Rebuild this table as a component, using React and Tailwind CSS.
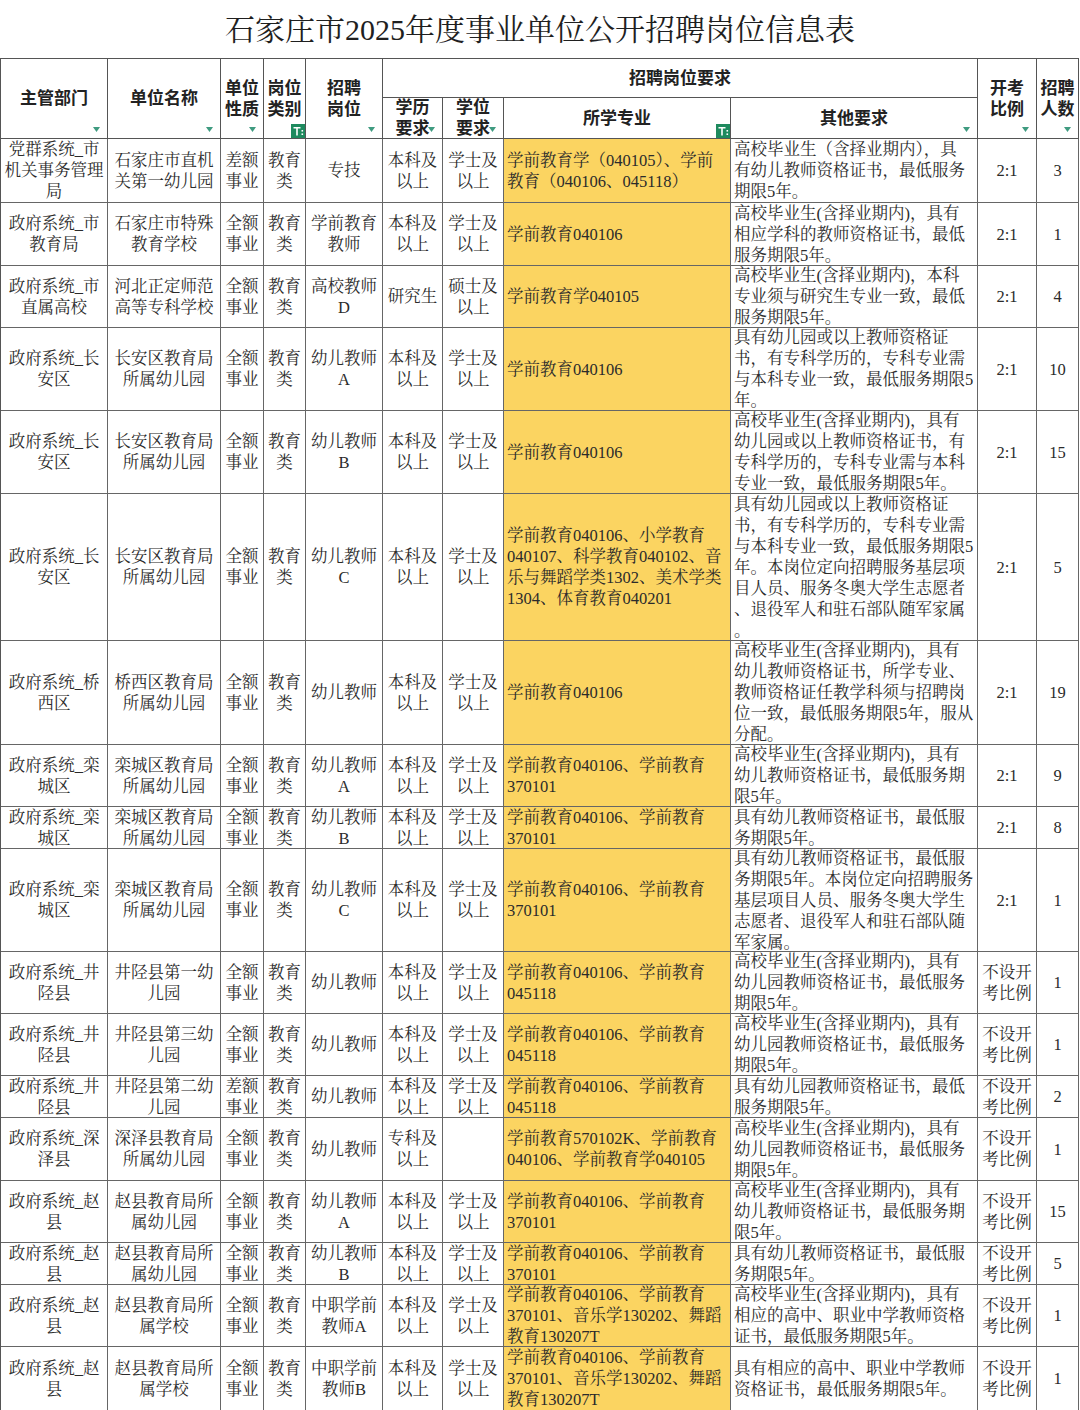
import React from "react";

const COLS =
  "grid grid-cols-[107px_113px_43px_42px_77px_60px_61px_227px_247px_59px_42px]";

const SERIF = {
  fontFamily:
    '"Liberation Serif", "Noto Serif CJK SC", "Noto Sans CJK SC", serif',
};

const rows = [
  { h: "h-[64px]", a: "党群系统_市\n机关事务管理\n局", b: "石家庄市直机\n关第一幼儿园", c: "差额\n事业", d: "教育\n类", e: "专技", f: "本科及\n以上", g: "学士及\n以上", m: "学前教育学（040105）、学前\n教育（040106、045118）", o: "高校毕业生（含择业期内），具\n有幼儿教师资格证书，最低服务\n期限5年。", r: "2:1", n: "3" },
  { h: "h-[63px]", a: "政府系统_市\n教育局", b: "石家庄市特殊\n教育学校", c: "全额\n事业", d: "教育\n类", e: "学前教育\n教师", f: "本科及\n以上", g: "学士及\n以上", m: "学前教育040106", o: "高校毕业生(含择业期内)，具有\n相应学科的教师资格证书，最低\n服务期限5年。", r: "2:1", n: "1" },
  { h: "h-[62px]", a: "政府系统_市\n直属高校", b: "河北正定师范\n高等专科学校", c: "全额\n事业", d: "教育\n类", e: "高校教师\nD", f: "研究生", g: "硕士及\n以上", m: "学前教育学040105", o: "高校毕业生(含择业期内)，本科\n专业须与研究生专业一致，最低\n服务期限5年。", r: "2:1", n: "4" },
  { h: "h-[83px]", a: "政府系统_长\n安区", b: "长安区教育局\n所属幼儿园", c: "全额\n事业", d: "教育\n类", e: "幼儿教师\nA", f: "本科及\n以上", g: "学士及\n以上", m: "学前教育040106", o: "具有幼儿园或以上教师资格证\n书，有专科学历的，专科专业需\n与本科专业一致，最低服务期限5\n年。", r: "2:1", n: "10" },
  { h: "h-[83px]", a: "政府系统_长\n安区", b: "长安区教育局\n所属幼儿园", c: "全额\n事业", d: "教育\n类", e: "幼儿教师\nB", f: "本科及\n以上", g: "学士及\n以上", m: "学前教育040106", o: "高校毕业生(含择业期内)，具有\n幼儿园或以上教师资格证书，有\n专科学历的，专科专业需与本科\n专业一致，最低服务期限5年。", r: "2:1", n: "15" },
  { h: "h-[147px]", a: "政府系统_长\n安区", b: "长安区教育局\n所属幼儿园", c: "全额\n事业", d: "教育\n类", e: "幼儿教师\nC", f: "本科及\n以上", g: "学士及\n以上", m: "学前教育040106、小学教育\n040107、科学教育040102、音\n乐与舞蹈学类1302、美术学类\n1304、体育教育040201", o: "具有幼儿园或以上教师资格证\n书，有专科学历的，专科专业需\n与本科专业一致，最低服务期限5\n年。本岗位定向招聘服务基层项\n目人员、服务冬奥大学生志愿者\n、退役军人和驻石部队随军家属\n。", r: "2:1", n: "5" },
  { h: "h-[104px]", a: "政府系统_桥\n西区", b: "桥西区教育局\n所属幼儿园", c: "全额\n事业", d: "教育\n类", e: "幼儿教师", f: "本科及\n以上", g: "学士及\n以上", m: "学前教育040106", o: "高校毕业生(含择业期内)，具有\n幼儿教师资格证书，所学专业、\n教师资格证任教学科须与招聘岗\n位一致，最低服务期限5年，服从\n分配。", r: "2:1", n: "19" },
  { h: "h-[62px]", a: "政府系统_栾\n城区", b: "栾城区教育局\n所属幼儿园", c: "全额\n事业", d: "教育\n类", e: "幼儿教师\nA", f: "本科及\n以上", g: "学士及\n以上", m: "学前教育040106、学前教育\n370101", o: "高校毕业生(含择业期内)，具有\n幼儿教师资格证书，最低服务期\n限5年。", r: "2:1", n: "9" },
  { h: "h-[42px]", a: "政府系统_栾\n城区", b: "栾城区教育局\n所属幼儿园", c: "全额\n事业", d: "教育\n类", e: "幼儿教师\nB", f: "本科及\n以上", g: "学士及\n以上", m: "学前教育040106、学前教育\n370101", o: "具有幼儿教师资格证书，最低服\n务期限5年。", r: "2:1", n: "8" },
  { h: "h-[103px]", a: "政府系统_栾\n城区", b: "栾城区教育局\n所属幼儿园", c: "全额\n事业", d: "教育\n类", e: "幼儿教师\nC", f: "本科及\n以上", g: "学士及\n以上", m: "学前教育040106、学前教育\n370101", o: "具有幼儿教师资格证书，最低服\n务期限5年。本岗位定向招聘服务\n基层项目人员、服务冬奥大学生\n志愿者、退役军人和驻石部队随\n军家属。", r: "2:1", n: "1" },
  { h: "h-[62px]", a: "政府系统_井\n陉县", b: "井陉县第一幼\n儿园", c: "全额\n事业", d: "教育\n类", e: "幼儿教师", f: "本科及\n以上", g: "学士及\n以上", m: "学前教育040106、学前教育\n045118", o: "高校毕业生(含择业期内)，具有\n幼儿园教师资格证书，最低服务\n期限5年。", r: "不设开\n考比例", n: "1" },
  { h: "h-[62px]", a: "政府系统_井\n陉县", b: "井陉县第三幼\n儿园", c: "全额\n事业", d: "教育\n类", e: "幼儿教师", f: "本科及\n以上", g: "学士及\n以上", m: "学前教育040106、学前教育\n045118", o: "高校毕业生(含择业期内)，具有\n幼儿园教师资格证书，最低服务\n期限5年。", r: "不设开\n考比例", n: "1" },
  { h: "h-[42px]", a: "政府系统_井\n陉县", b: "井陉县第二幼\n儿园", c: "差额\n事业", d: "教育\n类", e: "幼儿教师", f: "本科及\n以上", g: "学士及\n以上", m: "学前教育040106、学前教育\n045118", o: "具有幼儿园教师资格证书，最低\n服务期限5年。", r: "不设开\n考比例", n: "2" },
  { h: "h-[63px]", a: "政府系统_深\n泽县", b: "深泽县教育局\n所属幼儿园", c: "全额\n事业", d: "教育\n类", e: "幼儿教师", f: "专科及\n以上", g: "", m: "学前教育570102K、学前教育\n040106、学前教育学040105", o: "高校毕业生(含择业期内)，具有\n幼儿园教师资格证书，最低服务\n期限5年。", r: "不设开\n考比例", n: "1" },
  { h: "h-[62px]", a: "政府系统_赵\n县", b: "赵县教育局所\n属幼儿园", c: "全额\n事业", d: "教育\n类", e: "幼儿教师\nA", f: "本科及\n以上", g: "学士及\n以上", m: "学前教育040106、学前教育\n370101", o: "高校毕业生(含择业期内)，具有\n幼儿教师资格证书，最低服务期\n限5年。", r: "不设开\n考比例", n: "15" },
  { h: "h-[42px]", a: "政府系统_赵\n县", b: "赵县教育局所\n属幼儿园", c: "全额\n事业", d: "教育\n类", e: "幼儿教师\nB", f: "本科及\n以上", g: "学士及\n以上", m: "学前教育040106、学前教育\n370101", o: "具有幼儿教师资格证书，最低服\n务期限5年。", r: "不设开\n考比例", n: "5" },
  { h: "h-[62px]", a: "政府系统_赵\n县", b: "赵县教育局所\n属学校", c: "全额\n事业", d: "教育\n类", e: "中职学前\n教师A", f: "本科及\n以上", g: "学士及\n以上", m: "学前教育040106、学前教育\n370101、音乐学130202、舞蹈\n教育130207T", o: "高校毕业生(含择业期内)，具有\n相应的高中、职业中学教师资格\n证书，最低服务期限5年。", r: "不设开\n考比例", n: "1" },
  { h: "h-[64px]", a: "政府系统_赵\n县", b: "赵县教育局所\n属学校", c: "全额\n事业", d: "教育\n类", e: "中职学前\n教师B", f: "本科及\n以上", g: "学士及\n以上", m: "学前教育040106、学前教育\n370101、音乐学130202、舞蹈\n教育130207T", o: "具有相应的高中、职业中学教师\n资格证书，最低服务期限5年。", r: "不设开\n考比例", n: "1" },
];

function Arrow() {
  return (
    <svg className="absolute right-[7px] bottom-[6px]" width="7" height="5" viewBox="0 0 7 5">
      <path d="M0 0 L7 0 L3.5 5 Z" fill="#3f9b80" />
    </svg>
  );
}

function Filter() {
  return (
    <svg className="absolute right-0 bottom-0" width="14" height="14" viewBox="0 0 14 14">
      <rect width="14" height="14" fill="#1e8a5e" />
      <path d="M2.5 3 L9.5 3 L9.5 4.6 L6.8 4.6 L6.8 11.5 L5.2 11.5 L5.2 4.6 L2.5 4.6 Z" fill="#fff" />
      <rect x="10.5" y="6" width="1.6" height="1.6" fill="#fff" />
      <rect x="10.5" y="9.4" width="1.6" height="1.6" fill="#fff" />
    </svg>
  );
}

function Head({ children, className = "", icon }) {
  return (
    <div
      className={`relative flex items-center justify-center text-center border-r border-b border-[#555] whitespace-pre leading-[21px] ${className}`}
    >
      <span className="-mt-1">{children}</span>
      {icon === "arrow" && <Arrow />}
      {icon === "filter" && <Filter />}
    </div>
  );
}

function Cell({ children, left, yellow }) {
  return (
    <div
      className={`flex items-center overflow-hidden whitespace-pre leading-[21px] border-r border-b border-[#666] ${
        left ? "justify-start text-left pl-[3px]" : "justify-center text-center"
      } ${yellow ? "bg-[#fbd461]" : ""}`}
    >
      <span>{children}</span>
    </div>
  );
}

export default function App() {
  return (
    <div className="w-[1080px] h-[1410px] bg-white text-[#2b2b2b] overflow-hidden">
      <div
        className="h-[58px] flex items-center justify-center text-[30px] text-[#1f1f1f]"
        style={SERIF}
      >
        石家庄市2025年度事业单位公开招聘岗位信息表
      </div>

      <div className="w-[1079px] border-l border-t border-[#555]">
        <div
          className={`${COLS} grid-rows-[39px_41px] h-[80px] text-[17px] font-bold text-[#222]`}
          style={{ fontFamily: '"Noto Sans CJK SC", sans-serif' }}
        >
          <Head className="row-span-2" icon="arrow">主管部门</Head>
          <Head className="row-span-2" icon="arrow">单位名称</Head>
          <Head className="row-span-2" icon="arrow">{"单位\n性质"}</Head>
          <Head className="row-span-2" icon="filter">{"岗位\n类别"}</Head>
          <Head className="row-span-2" icon="arrow">{"招聘\n岗位"}</Head>
          <Head className="col-span-4">招聘岗位要求</Head>
          <Head className="row-span-2" icon="arrow">{"开考\n比例"}</Head>
          <Head className="row-span-2" icon="arrow">{"招聘\n人数"}</Head>
          <Head icon="arrow">{"学历\n要求"}</Head>
          <Head icon="arrow">{"学位\n要求"}</Head>
          <Head icon="filter">所学专业</Head>
          <Head icon="arrow">其他要求</Head>
        </div>

        <div className="text-[16.5px]" style={SERIF}>
          {rows.map((r, i) => (
            <div key={i} className={`${COLS} ${r.h}`}>
              <Cell>{r.a}</Cell>
              <Cell>{r.b}</Cell>
              <Cell>{r.c}</Cell>
              <Cell>{r.d}</Cell>
              <Cell>{r.e}</Cell>
              <Cell>{r.f}</Cell>
              <Cell>{r.g}</Cell>
              <Cell left yellow>{r.m}</Cell>
              <Cell left>{r.o}</Cell>
              <Cell>{r.r}</Cell>
              <Cell>{r.n}</Cell>
            </div>
          ))}
        </div>
      </div>
    </div>
  );
}
